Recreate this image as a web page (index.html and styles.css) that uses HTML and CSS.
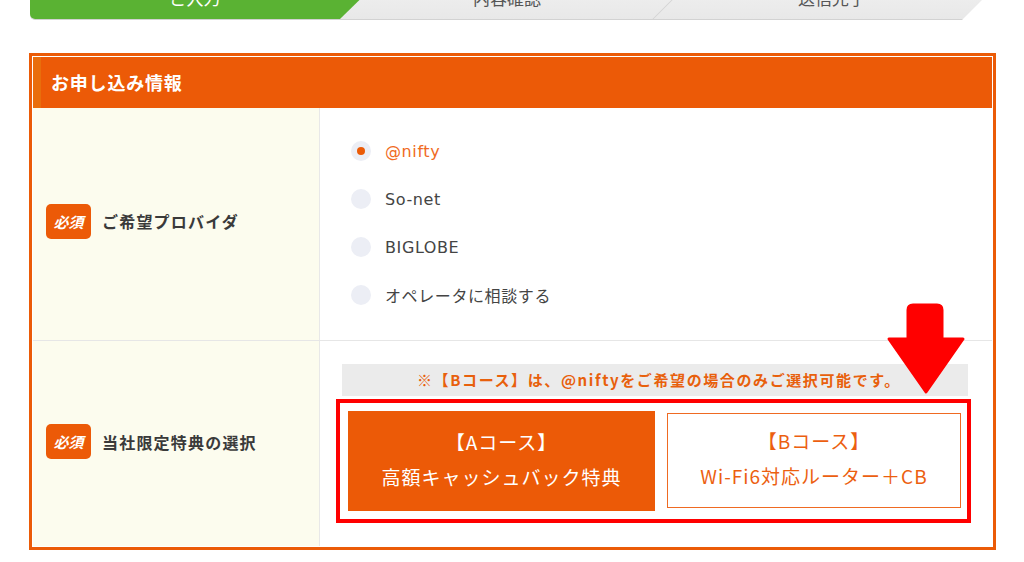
FILE: index.html
```html
<!DOCTYPE html>
<html lang="ja">
  <head>
    <meta charset="UTF-8" />
    <title>お申し込みフォーム</title>
    <link rel="stylesheet" href="styles.css">
  </head>
  <body>
    <div class="steps">
      <div class="step step-current">ご入力</div>
      <div class="step step-mid">内容確認</div>
      <div class="step step-last">送信完了</div>
    </div>

    <div class="form-box">
      <h3 class="form-title">お申し込み情報</h3>
      <div class="form-table">
        <div class="form-row row-provider">
          <div class="form-label">
            <span class="badge">必須</span>
            <span class="label-text">ご希望プロバイダ</span>
          </div>
          <div class="form-field">
            <ul class="radio-list">
              <li class="radio-item checked"><span class="radio"></span>@nifty</li>
              <li class="radio-item"><span class="radio"></span>So-net</li>
              <li class="radio-item"><span class="radio"></span>BIGLOBE</li>
              <li class="radio-item"><span class="radio"></span>オペレータに相談する</li>
            </ul>
          </div>
        </div>
        <div class="form-row row-course">
          <div class="form-label">
            <span class="badge">必須</span>
            <span class="label-text">当社限定特典の選択</span>
          </div>
          <div class="form-field course-field">
            <p class="note">※【Bコース】は、@niftyをご希望の場合のみご選択可能です。</p>
            <div class="course-box">
              <div class="course course-a">【Aコース】<br>高額キャッシュバック特典</div>
              <div class="course course-b">【Bコース】<br>Wi-Fi6対応ルーター＋CB</div>
            </div>
            <svg class="arrow" width="80" height="94" viewBox="0 0 80 94">
              <path d="M27 2 H51 Q56 2 56 7 V36 H77 L40 89 L3 36 H22 V7 Q22 2 27 2 Z" fill="#ff0000" stroke="#ff0000" stroke-width="3" stroke-linejoin="round" />
            </svg>
          </div>
        </div>
      </div>
    </div>
  </body>
</html>
```

FILE: styles.css
```css
body {
  margin: 0;
  background: #fff;
  font-family: "Noto Sans CJK JP", "DejaVu Sans", sans-serif;
  color: #333;
}

/* step bar */
.steps {
  display: flex;
  width: 976px;
  height: 44px;
  margin: -24px 0 0 30px;
  background: linear-gradient(#f2f2f2, #e8e8e8);
  border-bottom: 1px solid #d2d2d2;
  box-sizing: border-box;
  border-radius: 0 0 0 5px;
  clip-path: polygon(0 0, 100% 0, calc(100% - 44px) 100%, 0 100%);
}

.step {
  position: relative;
  display: flex;
  align-items: center;
  justify-content: center;
  font-size: 17px;
  color: #555;
}

.step-current {
  flex: 0 0 354px;
  padding-right: 24px;
  box-sizing: border-box;
  background: #5ab233;
  color: #fff;
  border-radius: 0 0 0 5px;
  clip-path: polygon(0 0, 100% 0, calc(100% - 44px) 100%, 0 100%);
}

.step-mid {
  flex: 0 0 290px;
  margin-left: -22px;
}

.step-last {
  flex: 1;
  padding: 0 14px 0 20px;
}

.step-last::before {
  content: "";
  position: absolute;
  left: 22px;
  top: 0;
  width: 1px;
  height: 100%;
  background: #d0d0d0;
  transform: skewX(-45deg);
}

/* form box */
.form-box {
  width: 967px;
  margin: 33px 0 0 29px;
  border: 3px solid #eb5b07;
  padding: 1px;
  box-sizing: border-box;
}

.form-title {
  margin: 0;
  height: 51px;
  padding-left: 10px;
  border-left: 8px solid #e96e0c;
  background: #ec5a07;
  color: #fff;
  font-size: 18px;
  font-weight: bold;
  line-height: 51px;
  letter-spacing: 0.8px;
}

.form-row {
  display: grid;
  grid-template-columns: 287px 1fr;
  border-bottom: 1px solid #e6e6e6;
}

.form-row:last-child {
  border-bottom: none;
}

.row-provider {
  height: 232px;
}

.row-course {
  height: 205px;
}

.form-label {
  display: flex;
  align-items: center;
  padding-left: 13px;
  background: #fcfcee;
  border-right: 1px solid #e8e8e8;
}

.row-provider .form-label {
  padding-bottom: 6px;
}

.row-course .form-label {
  padding-bottom: 4px;
}

.badge {
  width: 45px;
  height: 35px;
  border-radius: 5px;
  background: #ec5a07;
  color: #fff;
  font-size: 15px;
  font-weight: bold;
  font-style: italic;
  line-height: 35px;
  text-align: center;
}

.label-text {
  margin-left: 11px;
  font-size: 16px;
  font-weight: bold;
  letter-spacing: 1.2px;
  color: #3a3a3a;
}

/* radios */
.radio-list {
  list-style: none;
  margin: 0;
  padding: 19px 0 0 31px;
}

.radio-item {
  display: flex;
  align-items: center;
  height: 48px;
  font-family: "DejaVu Sans", "Noto Sans CJK JP", sans-serif;
  font-size: 16px;
  letter-spacing: 0.6px;
  color: #444;
}

.radio {
  position: relative;
  width: 20px;
  height: 20px;
  margin-right: 14px;
  border-radius: 50%;
  background: #eceef5;
}

.checked {
  color: #f06a22;
}

.checked .radio::after {
  content: "";
  position: absolute;
  left: 6px;
  top: 6px;
  width: 8px;
  height: 8px;
  border-radius: 50%;
  background: #eb5b07;
}

/* course select */
.course-field {
  position: relative;
  padding: 23px 24px 0 22px;
}

.note {
  margin: 0;
  height: 32px;
  padding-left: 8px;
  background: #ebebeb;
  color: #e8600c;
  font-size: 15px;
  font-weight: bold;
  line-height: 32px;
  letter-spacing: 1.6px;
  text-align: center;
}

.course-box {
  display: grid;
  grid-template-columns: 307px 1fr;
  gap: 12px;
  margin: 3px -3px 0 -6px;
  padding: 8px 6px 8px 8px;
  border: 4px solid #ff0000;
}

.course {
  display: flex;
  align-items: center;
  justify-content: center;
  padding-bottom: 5px;
  box-sizing: border-box;
  text-align: center;
  font-size: 19px;
  line-height: 35px;
  letter-spacing: 1px;
}

.course-a {
  height: 100px;
  background: #ec5a07;
  color: #fff;
}

.course-b {
  margin: 2px 0 3px;
  border: 1px solid #ef6a22;
  background: #fff;
  color: #ec5f10;
}

.arrow {
  position: absolute;
  left: 566px;
  top: -38px;
}
```
